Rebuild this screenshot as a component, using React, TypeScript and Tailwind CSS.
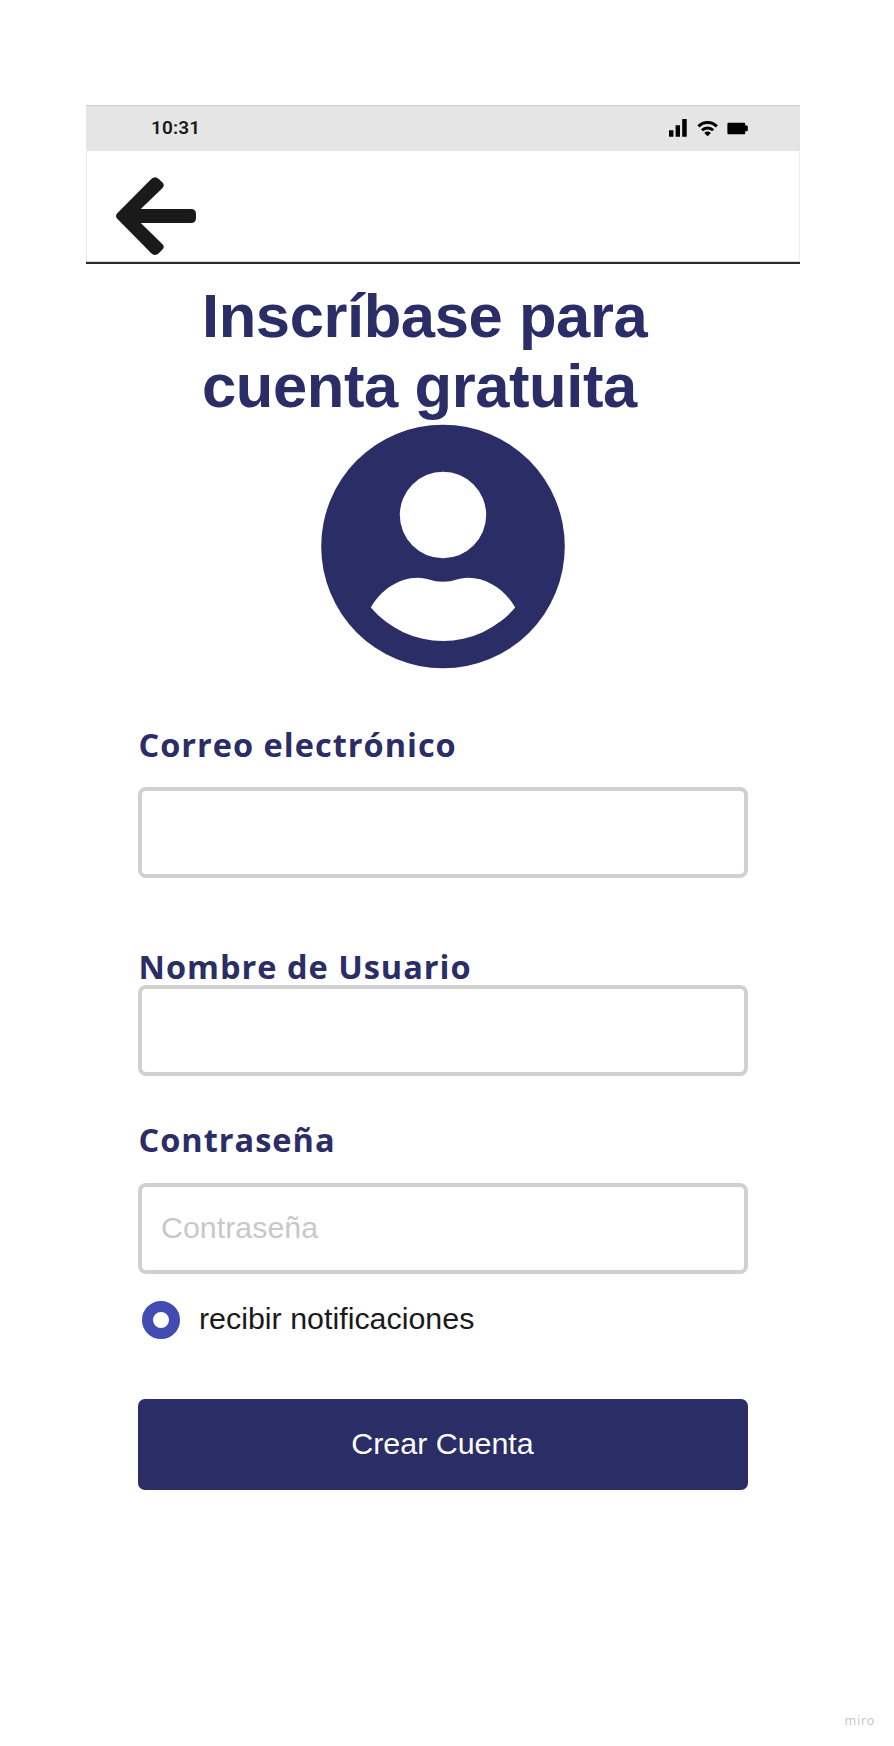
import type { ReactNode } from "react";

function StatusBar() {
  return (
    <div className="flex h-[46px] items-center justify-between border-t border-[#cfcfcf] bg-[#e5e5e5] pr-[52px] pb-[1.5px] pl-[65px]">
      <span className="font-['Roboto'] text-[19px] leading-none font-semibold tracking-[0.1px] text-[#1a1a1a]">
        10:31
      </span>
      <svg className="h-[18px] w-[79px]" viewBox="0 0 79 18" aria-hidden="true">
        <path d="M0 11.2h4.4v6.6H0zM6.6 6.2H11v11.6H6.6zM13.2 0h4.5v17.8h-4.5z" />
        <g fill="none" stroke="#000" strokeWidth="3">
          <path d="M29.4 7.4a13 13 0 0 1 18.4 0" />
          <path d="M33 11.3a8 8 0 0 1 11.2 0" />
        </g>
        <path d="M35.3 13.9a4.7 4.7 0 0 1 6.6 0l-3.3 3.3z" />
        <path d="M59.4 3.7h15.8q1 0 1 1v1.8h1.6q1 0 1 1v3.8q0 1-1 1h-1.6v2q0 1-1 1H59.4q-1 0-1-1V4.7q0-1 1-1z" />
      </svg>
    </div>
  );
}

function Label({ className, children }: { className: string; children: ReactNode }) {
  return (
    <label
      className={`block pl-[0.5px] font-['Open_Sans'] text-[32.5px] leading-[44px] font-bold tracking-[1px] whitespace-nowrap text-[#2b2d66] ${className}`}
    >
      {children}
    </label>
  );
}

function Field({ placeholder, type = "text" }: { placeholder?: string; type?: string }) {
  return (
    <input
      type={type}
      placeholder={placeholder}
      className="block h-[91px] w-full rounded-[8px] border-4 border-[#d0d0d0] bg-white px-[19px] pb-[3px] text-[30.4px] text-[#1a1a1a] outline-none placeholder:text-[#c8c8c8]"
    />
  );
}

export default function App() {
  return (
    <div className="flex h-[1746px] w-[894px] flex-col bg-white pt-[105px] font-['Liberation_Sans',Arial,sans-serif]">
      <header className="ml-[86px] w-[714px]">
        <StatusBar />
        <div className="h-[111px] border-x border-b border-x-[#ececec] border-b-[#d8d8d8] pt-[26px] pl-[29px]">
          <svg className="h-[78px] w-[80px]" viewBox="0 0 80 78" aria-label="Volver">
            <path
              fill="#1a1a1a"
              d="M1 36.5 35 2.2Q39-1.6 43 2.2L46 5Q49.5 8.2 46 11.5L24.8 32H75Q80 32 80 37V41Q80 46 75 46H24.8L46 66.8Q49.5 70 46 73L43 76Q39 79.8 35 76L1 41.5Q-1 39 1 36.5Z"
            />
          </svg>
        </div>
        <div className="h-[2px] bg-[#29292b]" />
      </header>

      <main className="ml-[138px] w-[610px]">
        <h1 className="pt-[17px] pl-[64px] text-[61.5px] leading-[70px] font-bold tracking-[-0.4px] whitespace-nowrap text-[#2b2d66]">
          Inscríbase para
          <br />
          cuenta gratuita
        </h1>
        <svg className="mx-auto mt-[3px] h-[245px] w-[244px]" viewBox="0 0 244 245" aria-hidden="true">
          <circle cx="122" cy="122.5" r="121.8" fill="#2b2d66" />
          <circle cx="122" cy="91" r="43.2" fill="#fff" />
          <path
            fill="#fff"
            d="M49.8 183.5C59.5 166.5 77 153.7 97 153.7C106.5 153.7 111 157.7 122 157.7S137.5 153.7 147 153.7C167 153.7 184.5 166.5 194.2 183.5A94.7 94.7 0 0 1 49.8 183.5Z"
          />
        </svg>

        <Label className="mt-[54px]">Correo electrónico</Label>
        <div className="mt-[20px]">
          <Field />
        </div>
        <Label className="mt-[67px]">Nombre de Usuario</Label>
        <div className="-mt-[4px]">
          <Field />
        </div>
        <Label className="mt-[42px]">Contraseña</Label>
        <div className="mt-[21px]">
          <Field placeholder="Contraseña" type="password" />
        </div>

        <div className="mt-[27px] flex h-[38px] items-center gap-[19px] pl-[4px]">
          <span className="size-[38px] rounded-full border-[11px] border-[#414bb2] bg-white" />
          <span className="pb-[3px] text-[30.4px] leading-none whitespace-nowrap text-[#1a1a1a]">
            recibir notificaciones
          </span>
        </div>

        <button className="mt-[60px] flex h-[91px] w-full items-center justify-center rounded-[7px] bg-[#2b2d66] pr-[1px] pb-[2px] text-[30.4px] text-white">
          Crear Cuenta
        </button>
      </main>

      <footer className="mt-auto mb-[16px] pr-[19px] text-right font-['Noto_Sans'] text-[12.5px] leading-[18px] tracking-[0.8px] text-[#c6c6ce]">
        miro
      </footer>
    </div>
  );
}
